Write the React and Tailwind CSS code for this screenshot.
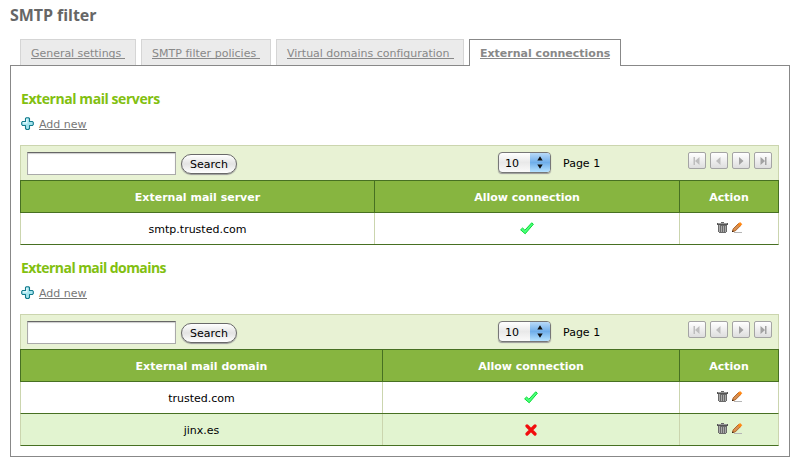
const Plus = () => (
  <svg width="14" height="14" viewBox="0 0 14 14" className="-ml-px shrink-0">
    <path d="M5.500 1.500l1-.8h2l1 .8v3h3l.8 1v2l-.8 1h-3v3l-1 1h-2l-1-1v-3h-3l-.8-1v-2l.8-1h3z" fill="#a5e4ee" stroke="#127a8c" strokeWidth="1.100" strokeLinejoin="round" />
    <path d="M6.800 1.800v4h-4" fill="none" stroke="#e6faff" strokeWidth="1.200" />
  </svg>
);

const Check = () => (
  <svg width="14" height="13" viewBox="0 0 14 13">
    <path d="M.6 7.800L2.600 6l2.300 2.200L11.700.8l1.700 1.400L5.200 11.800z" fill="#4dff7c" stroke="#08dc35" strokeLinejoin="round" />
  </svg>
);

const Cross = () => (
  <svg width="12" height="12" viewBox="0 0 12 12">
    <path d="M2 2l8 8M10 2l-8 8" stroke="#f20d0d" strokeWidth="3.200" strokeLinecap="round" />
  </svg>
);

const Trash = () => (
  <svg width="11" height="11" viewBox="0 0 11 11" shapeRendering="crispEdges">
    <path d="M4 0h3v1H4z" fill="#666" />
    <path d="M0 1h11v2H0z" fill="#555" />
    <path d="M1 1h9v1H1z" fill="#999" />
    <path d="M1 3h9v7H9v1H2v-1H1z" fill="#6a6a6a" />
    <path d="M2 3h1v7H2zM4 4h1v6H4zM6 4h1v6H6zM8 4h1v6H8z" fill="#aaa" />
  </svg>
);

const Pencil = () => (
  <svg width="11" height="11" viewBox="0 0 11 11" className="-mr-px">
    <path d="M2 10.500h8" stroke="#b5b5b5" />
    <path d="M.6 9.400l.5-2.500L6.500 1.500l2.100 2.100L3.200 9z" fill="#d98f50" stroke="#a65c20" strokeWidth=".9" />
    <path d="M6.200 2.400L8.200.5l1.500 1.800-1.800 1.900z" fill="#ff8a10" stroke="#ff8010" strokeWidth=".9" />
    <path d="M0 8.700h1.400v1.400H0z" fill="#3a2413" />
  </svg>
);

const arrows = [
  { d: "M4.500 4h1.500v8H4.500zM6 8l4.500-4v8z", c: "#bdbdbd" },
  { d: "M5 8l4.500-4v8z", c: "#bdbdbd" },
  { d: "M10.500 8L6 4v8z", c: "#a2a2a2" },
  { d: "M10 8L5.500 4v8zM10 4h1.500v8H10z", c: "#a2a2a2" },
];

function Toolbar() {
  return (
    <div className="flex h-[34px] items-start border-x border-[#cbd5ae] bg-[#e8f2d4] pt-[6px] pl-[6px] pr-[6px]">
      <input className="h-[23px] w-[149px] border border-[#aaa] border-t-[#666] bg-white shadow-[inset_0_1px_1px_#ccc] outline-none" />
      <button className="mt-[2px] ml-[5px] h-[20px] w-[56px] rounded-full border border-[#696969] bg-linear-to-b from-white via-[#e3e3e3] to-white pt-px text-[11px] leading-[18px] text-black shadow-[0_1px_1px_#999]">
        Search
      </button>
      <div className="ml-[261px] flex h-[21px] w-[53px] overflow-hidden rounded-[4px] border border-[#777] bg-linear-to-b from-white via-[#e9e9e9] to-[#fafafa] shadow-[0_1px_1px_#999]">
        <span className="w-[31px] pl-[6px] leading-[21px]">10</span>
        <span className="flex w-[20px] items-center justify-center bg-linear-to-b from-[#b8daf8] via-[#6faeea] to-[#b5e2ff]">
          <svg width="6" height="13" viewBox="0 0 6 13">
            <path d="M.3 4.500L3 .3l2.700 4.200zM.3 8.500L3 12.700l2.700-4.200z" fill="#111" />
          </svg>
        </span>
      </div>
      <span className="ml-[12px] leading-[24px]">Page 1</span>
      <div className="ml-auto flex gap-[4px]">
        {arrows.map((a) => (
          <span key={a.d} className="h-[17px] w-[18px] rounded-[2px] border border-[#a4a4a4] bg-linear-to-b from-white to-[#dedede]">
            <svg width="16" height="16" viewBox="0 0 16 16">
              <path d={a.d} fill={a.c} />
            </svg>
          </span>
        ))}
      </div>
    </div>
  );
}

function Section({ title, spacing, column, columns, rows }) {
  return (
    <section>
      <h3 className={"ml-px h-[20px] whitespace-nowrap font-['Open_Sans',sans-serif] text-[14px] leading-[20px] font-bold text-[#82c010] " + spacing}>{title}</h3>
      <div className="mt-[8px] ml-px flex h-[14px] items-start">
        <Plus />
        <a className="ml-[5px] border-b border-[#777] pt-[4px] leading-[8px] text-[#777]">Add new</a>
      </div>
      <div className="mt-[14px] w-[759px] border-t border-[#cbd5ae]">
        <Toolbar />
        <div className={"grid h-[33px] border border-[#477022] bg-[#87b540] text-center leading-[33px] font-bold text-white " + columns}>
          <span className="border-r border-[#477022]">{column}</span>
          <span className="border-r border-[#477022]">Allow connection</span>
          <span>Action</span>
        </div>
        {rows.map((row) => (
          <div key={row.name} className={"grid h-[32px] border-x border-b border-x-[#cbd5ae] border-b-[#477022] text-center leading-[34px] " + columns + (row.shaded ? " bg-[#e2f4d0]" : "")}>
            <span className="h-[31px] border-r border-[#cbd5ae]">{row.name}</span>
            <span className="flex h-[31px] items-center justify-center border-r border-[#cbd5ae]">{row.allowed ? <Check /> : <Cross />}</span>
            <span className="flex h-[29px] items-center justify-center gap-[4px]">
              <Trash />
              <Pencil />
            </span>
          </div>
        ))}
      </div>
    </section>
  );
}

const tabs = [
  { label: "General settings", width: "w-[116px]", spacing: "tracking-[-0.030px]" },
  { label: "SMTP filter policies", width: "w-[130px]", spacing: "tracking-[0.020px]" },
  { label: "Virtual domains configuration", width: "w-[188px]", spacing: "tracking-[-0.010px]" },
];

export default function App() {
  return (
    <main className="h-[472px] w-[800px] overflow-hidden bg-white pl-[10px] font-['DejaVu_Sans',Verdana,sans-serif] text-[11px] text-black">
      <h1 className="h-[39px] pt-[4px] font-['Open_Sans',sans-serif] text-[16px] leading-[22px] font-bold tracking-[-0.050px] text-[#666]">SMTP filter</h1>
      <nav className="relative flex h-[27px] gap-[5px] pl-[10px]">
        {tabs.map((t) => (
          <div key={t.label} className={"h-[26px] border border-b-0 border-[#d5d5d5] bg-[#ebebeb] pt-[6px] pl-[10px] " + t.width}>
            <a className={"block w-fit border-b border-[#888] pt-[3px] pr-[4px] leading-[9px] whitespace-nowrap text-[#888] " + t.spacing}>{t.label}</a>
          </div>
        ))}
        <div className="h-[27px] w-[152px] border border-b-0 border-[#888] bg-white pt-[6px] pl-[10px]">
          <a className="block w-fit border-b border-[#888] pt-[3px] leading-[9px] font-bold whitespace-nowrap text-[#888]">External connections</a>
        </div>
      </nav>
      <div className="-mt-px flex h-[392px] w-[780px] flex-col gap-[13px] border border-[#888] pt-[23px] pl-[9px]">
        <Section
          title="External mail servers"
          spacing="tracking-[-0.430px]"
          column="External mail server"
          columns="grid-cols-[354px_305px_98px]"
          rows={[{ name: "smtp.trusted.com", allowed: true }]}
        />
        <Section
          title="External mail domains"
          spacing="tracking-[-0.560px]"
          column="External mail domain"
          columns="grid-cols-[362px_297px_98px]"
          rows={[
            { name: "trusted.com", allowed: true },
            { name: "jinx.es", allowed: false, shaded: true },
          ]}
        />
      </div>
    </main>
  );
}
